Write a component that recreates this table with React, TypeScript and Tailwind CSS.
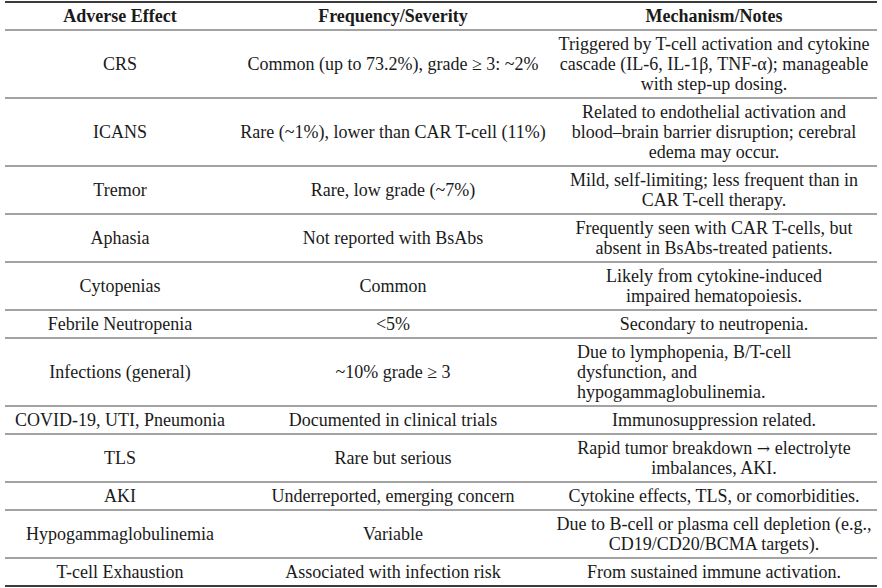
import React from "react";

type Row = {
  effect: string;
  freq: string;
  notes: React.ReactNode[];
  left?: boolean;
};

const arrow = <span className="font-['DejaVu_Serif'] text-[16px] leading-none">→</span>;

const rows: Row[] = [
  {
    effect: "CRS",
    freq: "Common (up to 73.2%), grade ≥ 3: ~2%",
    notes: [
      "Triggered by T-cell activation and cytokine",
      "cascade (IL-6, IL-1β, TNF-α); manageable",
      "with step-up dosing.",
    ],
  },
  {
    effect: "ICANS",
    freq: "Rare (~1%), lower than CAR T-cell (11%)",
    notes: [
      "Related to endothelial activation and",
      "blood–brain barrier disruption; cerebral",
      "edema may occur.",
    ],
  },
  {
    effect: "Tremor",
    freq: "Rare, low grade (~7%)",
    notes: ["Mild, self-limiting; less frequent than in", "CAR T-cell therapy."],
  },
  {
    effect: "Aphasia",
    freq: "Not reported with BsAbs",
    notes: ["Frequently seen with CAR T-cells, but", "absent in BsAbs-treated patients."],
  },
  {
    effect: "Cytopenias",
    freq: "Common",
    notes: ["Likely from cytokine-induced", "impaired hematopoiesis."],
  },
  {
    effect: "Febrile Neutropenia",
    freq: "<5%",
    notes: ["Secondary to neutropenia."],
  },
  {
    effect: "Infections (general)",
    freq: "~10% grade ≥ 3",
    notes: ["Due to lymphopenia, B/T-cell", "dysfunction, and", "hypogammaglobulinemia."],
    left: true,
  },
  {
    effect: "COVID-19, UTI, Pneumonia",
    freq: "Documented in clinical trials",
    notes: ["Immunosuppression related."],
  },
  {
    effect: "TLS",
    freq: "Rare but serious",
    notes: [<>Rapid tumor breakdown {arrow} electrolyte</>, "imbalances, AKI."],
  },
  {
    effect: "AKI",
    freq: "Underreported, emerging concern",
    notes: ["Cytokine effects, TLS, or comorbidities."],
  },
  {
    effect: "Hypogammaglobulinemia",
    freq: "Variable",
    notes: ["Due to B-cell or plasma cell depletion (e.g.,", "CD19/CD20/BCMA targets)."],
  },
  {
    effect: "T-cell Exhaustion",
    freq: "Associated with infection risk",
    notes: ["From sustained immune activation."],
  },
];

export default function App() {
  return (
    <div
      className="w-[882px] h-[588px] bg-white pt-[1px] px-[5px] text-[#1a1a1a] text-[18px] leading-[20px]"
      style={{ fontFamily: '"Liberation Serif", "Times New Roman", serif' }}
    >
      <div className="border-t-2 border-[#3c3c3c]">
        {/* header */}
        <div className="grid grid-cols-[230px_316px_326px] border-b-2 border-[#a3a3a3] font-bold">
          <div className="text-center pt-[3px] pb-[3px]">Adverse Effect</div>
          <div className="text-center pt-[3px] pb-[3px]">Frequency/Severity</div>
          <div className="text-center pt-[3px] pb-[3px]">Mechanism/Notes</div>
        </div>

        {rows.map((r, idx) => (
          <div
            key={idx}
            className={
              "grid grid-cols-[230px_316px_326px] border-b-2 " +
              (idx === rows.length - 1 ? "border-[#3c3c3c]" : "border-[#a3a3a3]")
            }
          >
            <div className="flex items-center justify-center text-center whitespace-nowrap pt-[3px] pb-[3px]">
              {r.effect}
            </div>
            <div className="flex items-center justify-center text-center whitespace-nowrap pt-[3px] pb-[3px]">
              {r.freq}
            </div>
            <div
              className={
                r.left
                  ? "pt-[3px] pb-[3px] pl-[26px] text-left"
                  : "pt-[3px] pb-[3px] text-center"
              }
            >
              {r.notes.map((line, i) => (
                <div key={i} className="whitespace-nowrap h-[20px]">
                  {line}
                </div>
              ))}
            </div>
          </div>
        ))}
      </div>
    </div>
  );
}
